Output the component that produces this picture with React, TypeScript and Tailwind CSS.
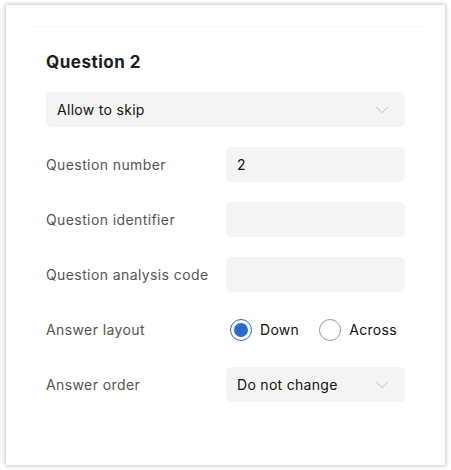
import { ChevronDown } from "lucide-react";

const Field = ({ label, children }: { label: string; children: React.ReactNode }) => (
  <div className="flex items-center h-[35px]">
    <span className="w-[180px] text-[14px] text-[#555] tracking-[0.4px]">{label}</span>
    <div className="flex-1 h-full flex items-center">{children}</div>
  </div>
);

const Select = ({ value }: { value: string }) => (
  <div className="w-full h-full bg-[#f4f4f4] rounded-[5px] flex items-center justify-between pl-[11px] pr-[12px] text-[14px] text-[#111] tracking-[0.3px]">
    <span>{value}</span>
    <ChevronDown className="size-[22px] text-[#b8b8b8]" strokeWidth={1} />
  </div>
);

const Input = ({ value }: { value?: string }) => (
  <div className="w-full h-full bg-[#f4f4f4] rounded-[5px] flex items-center px-[11px] text-[14px] text-[#111]">
    {value}
  </div>
);

const Radio = ({ label, checked }: { label: string; checked?: boolean }) => (
  <label className="flex items-center gap-[8px] text-[14px] text-[#111] tracking-[0.3px]">
    {checked ? (
      <span className="size-[22px] rounded-full border-[1.5px] border-[#2a6ac8] flex items-center justify-center">
        <span className="size-[14px] rounded-full bg-[#2a6ac8]" />
      </span>
    ) : (
      <span className="size-[22px] rounded-full border-[1.5px] border-[#999]" />
    )}
    {label}
  </label>
);

export default function App() {
  return (
    <div className="w-[451px] h-[470px] bg-white p-[5px_6px_5px_6px] font-['Inter','Noto_Sans',sans-serif]">
      <div className="h-[460px] bg-white shadow-[0_0_4px_1px_rgba(0,0,0,0.22)] flex flex-col">
        <div className="mx-[21px] mt-[21px] h-px bg-[#f8f8f8]" />
        <div className="px-[40px] pt-[23px] flex flex-col gap-[20px]">
          <h2 className="text-[17px] font-bold text-[#1d1d1d] leading-[24px] tracking-[0.5px] -mb-[2px]">Question 2</h2>
          <div className="h-[35px]">
            <Select value="Allow to skip" />
          </div>
          <Field label="Question number">
            <Input value="2" />
          </Field>
          <Field label="Question identifier">
            <Input />
          </Field>
          <Field label="Question analysis code">
            <Input />
          </Field>
          <Field label="Answer layout">
            <div className="flex items-center gap-[20px] pl-[4px]">
              <Radio label="Down" checked />
              <Radio label="Across" />
            </div>
          </Field>
          <Field label="Answer order">
            <Select value="Do not change" />
          </Field>
        </div>
      </div>
    </div>
  );
}
